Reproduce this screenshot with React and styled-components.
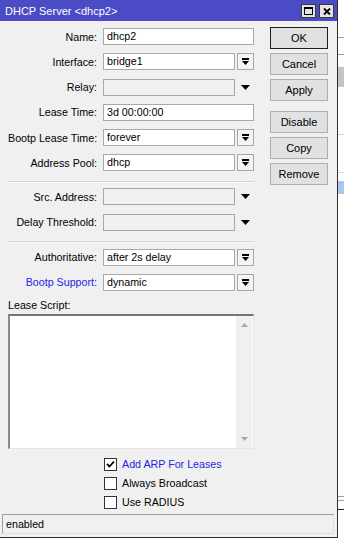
import React from 'react';
import styled, { createGlobalStyle, css } from 'styled-components';

const GlobalStyle = createGlobalStyle`
  html, body {
    margin: 0;
    padding: 0;
    background: #ffffff;
  }
  body {
    font-family: "Liberation Sans", Arial, sans-serif;
    font-size: 10.7px;
    color: #000;
  }
`;

const Screen = styled.div`
  display: flex;
  width: 344px;
  height: 540px;
  overflow: hidden;
`;

const Window = styled.div`
  width: 337px;
  height: 537px;
  flex: none;
  display: flex;
  flex-direction: column;
  background: #f0f0f0;
  border-right: 1px solid #2b2b2b;
  border-bottom: 1px solid #2b2b2b;
`;

const TitleBar = styled.div`
  height: 21px;
  flex: none;
  display: flex;
  align-items: center;
  justify-content: space-between;
  padding: 0 3px 0 5px;
  background: #4b4bc6;
  color: #fff;
  font-size: 11px;
`;

const TitleButtons = styled.div`
  display: flex;
  gap: 3px;
  padding-top: 1px;
`;

const TitleButton = styled.div`
  width: 13px;
  height: 12px;
  display: flex;
  align-items: center;
  justify-content: center;
  background: #e4e4e4;
  border: 1px solid #3a3a3a;
`;

const Body = styled.div`
  flex: 1;
  display: flex;
`;

const Form = styled.div`
  width: 246px;
  padding: 7px 0 0 8px;
  display: flex;
  flex-direction: column;
`;

const FieldGroup = styled.div`
  display: flex;
  flex-direction: column;
  gap: 8.25px;
`;

const Row = styled.div`
  display: grid;
  grid-template-columns: 89px 151px;
  column-gap: 6px;
  align-items: center;
  height: 17px;
`;

const Label = styled.div`
  text-align: right;
  white-space: nowrap;
  color: ${p => (p.$blue ? '#2424e6' : '#000')};
`;

const Field = styled.div`
  display: flex;
  gap: 2px;
  height: 17px;
`;

const Input = styled.div`
  flex: 1;
  box-sizing: border-box;
  height: 17px;
  padding: 0 3px;
  line-height: 15px;
  border: 1px solid #a8a8a8;
  background: ${p => (p.$disabled ? '#f0f0f0' : '#ffffff')};
  white-space: nowrap;
  overflow: hidden;
`;

const DropButton = styled.div`
  width: 17px;
  box-sizing: border-box;
  display: flex;
  align-items: center;
  justify-content: center;

  ${p => p.$boxed && css`
    border: 1px solid #a8a8a8;
    background: #f4f4f4;
  `}
`;

const Separator = styled.div`
  height: 0;
  border-top: 1px solid #d4d4d4;
  border-bottom: 1px solid #fbfbfb;
  margin: ${p => p.$top}px 0 ${p => p.$bottom}px;
`;

const ScriptLabel = styled.div`
  margin-top: 8px;
  line-height: 13px;
`;

const ScriptBox = styled.div`
  margin-top: 2px;
  width: 246px;
  height: 135px;
  box-sizing: border-box;
  display: flex;
  background: #fff;
  border-top: 2px solid #747474;
  border-left: 2px solid #8a8a8a;
  border-right: 1px solid #e6e6e6;
  border-bottom: 1px solid #e6e6e6;
`;

const ScriptArea = styled.div`
  flex: 1;
`;

const ScrollBar = styled.div`
  width: 16px;
  margin-right: 1px;
  background: #f0f0f0;
  display: flex;
  flex-direction: column;
  justify-content: space-between;
  align-items: center;
  padding: 7px 0 7px;
`;

const CheckList = styled.div`
  display: flex;
  flex-direction: column;
  gap: 6px;
  margin: 9px 0 0 96px;
`;

const CheckRow = styled.div`
  display: flex;
  align-items: center;
  gap: 5px;
  height: 13px;
`;

const CheckBox = styled.div`
  width: 13px;
  height: 13px;
  box-sizing: border-box;
  border: 1px solid #333;
  background: #fff;
  display: flex;
  align-items: center;
  justify-content: center;
`;

const CheckText = styled.span`
  color: ${p => (p.$blue ? '#2424e6' : '#000')};
`;

const StatusBar = styled.div`
  margin: 0 3px 3px 2px;
  height: 20px;
  box-sizing: border-box;
  padding: 0 3px;
  line-height: 18px;
  border-top: 1px solid #a0a0a0;
  border-left: 1px solid #a0a0a0;
  border-right: 1px solid #dcdcdc;
  border-bottom: 1px solid #dcdcdc;
`;

const ButtonColumn = styled.div`
  display: flex;
  flex-direction: column;
  gap: 4px;
  padding: 6px 0 0 16px;
`;

const DialogButton = styled.div`
  width: 58px;
  height: 22px;
  box-sizing: border-box;
  display: flex;
  align-items: center;
  justify-content: center;
  background: #e1e1e1;
  border: 1px solid #adadad;
  font-size: 11px;
  margin-top: ${p => (p.$spaced ? 6 : 0)}px;

  ${p => p.$primary && css`
    border: 1px solid #1e1e1e;
    box-shadow: inset 0 0 0 1px #e1e1e1;
  `}
`;

const BackStrip = styled.div`
  flex: 1;
  display: flex;
  flex-direction: column;
  background: #fff;
  padding-top: 37px;
`;

const BackLine = styled.div`
  height: 1px;
  background: ${p => p.$color || '#a0a0a0'};
  margin-top: ${p => p.$gap}px;
`;

const BackBlock = styled.div`
  height: ${p => p.$h}px;
  background: ${p => p.$color};
  margin-top: ${p => p.$gap}px;
`;

function ComboGlyph() {
  return (
    <svg width="7" height="7" viewBox="0 0 7 7">
      <rect x="0" y="0" width="7" height="2" fill="#000" />
      <path d="M0 3 H7 L3.5 7 Z" fill="#000" />
    </svg>
  );
}

function ArrowGlyph() {
  return (
    <svg width="9" height="5" viewBox="0 0 9 5">
      <path d="M0 0 H9 L4.5 5 Z" fill="#000" />
    </svg>
  );
}

function ScrollArrow({ up }) {
  return (
    <svg width="7" height="4" viewBox="0 0 7 4">
      <path d={up ? 'M0 4 H7 L3.5 0 Z' : 'M0 0 H7 L3.5 4 Z'} fill="#a8a8a8" />
    </svg>
  );
}

function FormRow({ label, value, kind, blue }) {
  const disabled = kind === 'arrow';
  return (
    <Row>
      <Label $blue={blue}>{label}</Label>
      <Field>
        <Input $disabled={disabled}>{value}</Input>
        {kind === 'combo' && (
          <DropButton $boxed>
            <ComboGlyph />
          </DropButton>
        )}
        {kind === 'arrow' && (
          <DropButton>
            <ArrowGlyph />
          </DropButton>
        )}
      </Field>
    </Row>
  );
}

function Check({ checked, blue, children }) {
  return (
    <CheckRow>
      <CheckBox>
        {checked && (
          <svg width="9" height="8" viewBox="0 0 9 8">
            <path d="M1 4 L3.5 6.5 L8 1.5" stroke="#000" strokeWidth="1.8" fill="none" />
          </svg>
        )}
      </CheckBox>
      <CheckText $blue={blue}>{children}</CheckText>
    </CheckRow>
  );
}

export default function App() {
  return (
    <>
      <GlobalStyle />
      <Screen>
        <Window>
          <TitleBar>
            <span>DHCP Server &lt;dhcp2&gt;</span>
            <TitleButtons>
              <TitleButton>
                <svg width="9" height="8" viewBox="0 0 9 8">
                  <rect x="0.5" y="0.5" width="8" height="7" fill="none" stroke="#000" />
                  <rect x="0" y="0" width="9" height="2" fill="#000" />
                </svg>
              </TitleButton>
              <TitleButton>
                <svg width="8" height="7" viewBox="0 0 8 7">
                  <path d="M1 0.5 L7 6.5 M7 0.5 L1 6.5" stroke="#000" strokeWidth="1.8" />
                </svg>
              </TitleButton>
            </TitleButtons>
          </TitleBar>
          <Body>
            <Form>
              <FieldGroup>
                <FormRow label="Name:" value="dhcp2" />
                <FormRow label="Interface:" value="bridge1" kind="combo" />
                <FormRow label="Relay:" value="" kind="arrow" />
                <FormRow label="Lease Time:" value="3d 00:00:00" />
                <FormRow label="Bootp Lease Time:" value="forever" kind="combo" />
                <FormRow label="Address Pool:" value="dhcp" kind="combo" />
              </FieldGroup>
              <Separator $top={10} $bottom={5} />
              <FieldGroup>
                <FormRow label="Src. Address:" value="" kind="arrow" />
                <FormRow label="Delay Threshold:" value="" kind="arrow" />
              </FieldGroup>
              <Separator $top={10} $bottom={6} />
              <FieldGroup>
                <FormRow label="Authoritative:" value="after 2s delay" kind="combo" />
                <FormRow label="Bootp Support:" value="dynamic" kind="combo" blue />
              </FieldGroup>
              <ScriptLabel>Lease Script:</ScriptLabel>
              <ScriptBox>
                <ScriptArea />
                <ScrollBar>
                  <ScrollArrow up />
                  <ScrollArrow />
                </ScrollBar>
              </ScriptBox>
              <CheckList>
                <Check checked blue>Add ARP For Leases</Check>
                <Check>Always Broadcast</Check>
                <Check>Use RADIUS</Check>
              </CheckList>
            </Form>
            <ButtonColumn>
              <DialogButton $primary>OK</DialogButton>
              <DialogButton>Cancel</DialogButton>
              <DialogButton>Apply</DialogButton>
              <DialogButton $spaced>Disable</DialogButton>
              <DialogButton>Copy</DialogButton>
              <DialogButton>Remove</DialogButton>
            </ButtonColumn>
          </Body>
          <StatusBar>enabled</StatusBar>
        </Window>
        <BackStrip>
          <BackLine $gap={0} />
          <BackLine $gap={16} />
          <BackBlock $h={20} $color="#c4c4c4" $gap={12} />
          <BackLine $gap={47} $color="#d8d8d8" />
          <BackLine $gap={37} $color="#d8d8d8" />
          <BackBlock $h={13} $color="#a9c8ef" $gap={8} />
          <BackLine $gap={302} $color="#a0a0a0" />
          <BackLine $gap={3} $color="#a0a0a0" />
          <BackLine $gap={8} $color="#222" />
        </BackStrip>
      </Screen>
    </>
  );
}
